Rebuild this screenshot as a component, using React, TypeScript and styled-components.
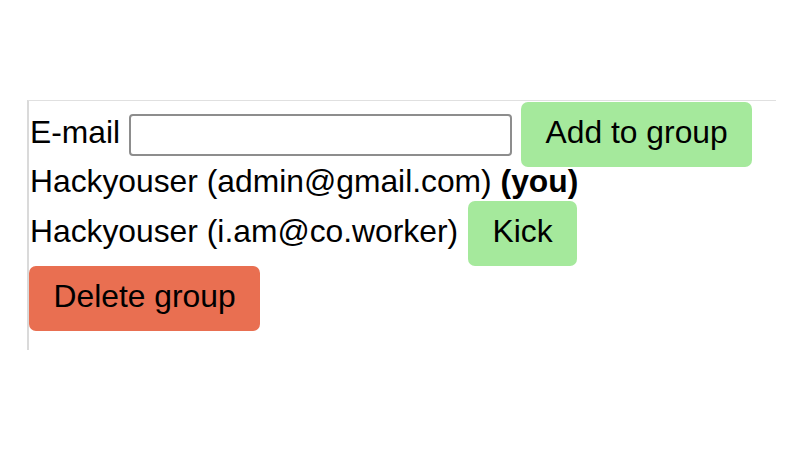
import React, { useState } from 'react';
import styled, { createGlobalStyle } from 'styled-components';

const GlobalStyle = createGlobalStyle`
  body {
    margin: 0;
    background: #ffffff;
    font-family: "Liberation Sans", Arial, sans-serif;
    color: #000000;
  }
`;

const Page = styled.div`
  padding-top: 100px;
  padding-left: 27px;
`;

const GroupPanel = styled.div`
  width: 747px;
  border-top: 1px solid #e0e0e0;
  border-left: 2px solid #dadada;
  padding-bottom: 19px;
  font-size: 31.8px;
  line-height: 34px;
`;

const InviteRow = styled.form`
  display: flex;
  align-items: center;
  gap: 9px;
  margin: 1px 0 0 0;
`;

// text sits a little above the middle of its line, as in the reference
const Label = styled.label`
  padding-left: 1px;
  line-height: 29px;
  padding-bottom: 5px;
`;

const EmailInput = styled.input`
  box-sizing: border-box;
  width: 383px;
  height: 42px;
  border: 2px solid #8d8d8d;
  border-radius: 4px;
  padding: 0 6px;
  font-family: inherit;
  font-size: 20px;
  outline: none;
`;

const MemberRow = styled.div`
  display: flex;
  align-items: center;
  gap: 10px;
  padding-left: 1px;
  min-height: 34px;
`;

const MemberText = styled.span`
  line-height: 29px;
  padding-bottom: 5px;
`;

const You = styled.strong`
  font-weight: bold;
`;

const ActionButton = styled.button<{ $tone: 'green' | 'red' }>`
  box-sizing: border-box;
  height: 65px;
  padding: 0 24.5px 5px;
  border: none;
  border-radius: 7px;
  background: ${(p) => (p.$tone === 'green' ? '#a5e99c' : '#e96f51')};
  color: #000000;
  font-family: inherit;
  font-size: 31.8px;
  line-height: 34px;
  cursor: pointer;
`;

const DeleteRow = styled.div`
  display: flex;
`;

type Member = { name: string; email: string; self: boolean };

const App = () => {
  const [email, setEmail] = useState('');
  const members: Member[] = [
    { name: 'Hackyouser', email: 'admin@gmail.com', self: true },
    { name: 'Hackyouser', email: 'i.am@co.worker', self: false },
  ];

  return (
    <Page>
      <GlobalStyle />
      <GroupPanel>
        <InviteRow onSubmit={(e) => e.preventDefault()}>
          <Label htmlFor="email">E-mail</Label>
          <EmailInput id="email" value={email} onChange={(e) => setEmail(e.target.value)} />
          <ActionButton $tone="green" type="submit">Add to group</ActionButton>
        </InviteRow>
        {members.map((m) => (
          <MemberRow key={m.email}>
            <MemberText>
              {m.name} ({m.email}){m.self && <> <You>(you)</You></>}
            </MemberText>
            {!m.self && <ActionButton $tone="green">Kick</ActionButton>}
          </MemberRow>
        ))}
        <DeleteRow>
          <ActionButton $tone="red">Delete group</ActionButton>
        </DeleteRow>
      </GroupPanel>
    </Page>
  );
};

export default App;
